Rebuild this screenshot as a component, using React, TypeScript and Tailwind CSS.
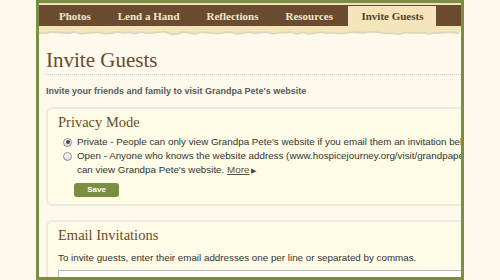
const tabs = ['Photos', 'Lend a Hand', 'Reflections', 'Resources', 'Invite Guests'];

// jagged bottom edge of the paper strip under the nav
const edge = (() => {
  let seed = 7;
  const rand = () => {
    seed = (seed * 9301 + 49297) % 233280;
    return seed / 233280;
  };
  const pts: string[] = [];
  for (let x = 0; x <= 422; x += 6) {
    pts.push(`${x},${(5 + rand() * 2.5).toFixed(1)}`);
  }
  return pts.join(' ');
})();

function TornEdge() {
  return (
    <svg width="422" height="10" viewBox="0 0 422 10" className="block shrink-0">
      <polygon points={`0,0 422,0 ${edge.split(' ').reverse().map((p) => {
        const [x, y] = p.split(',');
        return `${x},${(parseFloat(y) + 1.6).toFixed(1)}`;
      }).join(' ')}`} fill="#ddd5bb" />
      <polygon points={`0,0 422,0 ${edge.split(' ').reverse().join(' ')}`} fill="#f4e5ba" />
    </svg>
  );
}

function Radio({ checked }: { checked?: boolean }) {
  return (
    <span className="w-[9px] h-[9px] rounded-full border border-[#8f8f8f] bg-gradient-to-b from-[#ffffff] to-[#d9d9d9] flex items-center justify-center shrink-0">
      {checked && <span className="w-[4px] h-[4px] rounded-full bg-[#3f4a5a]" />}
    </span>
  );
}

export default function App() {
  return (
    <div className="w-[500px] h-[280px] bg-[#fdf9ec] overflow-hidden">
      <div className="ml-[36px] w-[428px] h-[280px] border-[3px] border-[#7b8c43] overflow-hidden bg-[#fdf9ed] flex flex-col">
        <div className="h-[2px] bg-[#efe2bc] shrink-0" />
        <nav className="h-[21px] bg-[#6b4b2f] flex items-end pl-[6.5px] shrink-0 font-['Liberation_Serif',serif] font-bold text-[11px]">
          {tabs.map((t) => (
            <div
              key={t}
              className={
                t === 'Invite Guests'
                  ? 'h-[20px] ml-[2px] px-[13px] flex items-center bg-[#f4e5ba] text-[#5a3f26]'
                  : 'h-[20px] px-[13.5px] flex items-center text-[#f3e8cc]'
              }
            >
              {t}
            </div>
          ))}
        </nav>
        <TornEdge />

        <div className="pl-[7px] font-['Liberation_Sans',Arial,sans-serif]">
          <h1 className="mt-[12px] h-[27px] leading-[24px] text-[21px] text-[#6b4a2b] font-['Liberation_Serif',serif] border-b border-dotted border-[#cdc7b5]">
            Invite Guests
          </h1>
          <p className="mt-[10px] leading-[12px] text-[9px] font-bold text-[#595959]">
            Invite your friends and family to visit Grandpa Pete's website
          </p>

          <section className="mt-[10px] w-[450px] rounded-[6px] border-2 border-[#ece9dd] bg-[#fefce6] pt-[5px] pl-[10px] pb-[7px]">
            <h2 className="leading-[16px] text-[14.5px] text-[#6b4a2b] font-['Liberation_Serif',serif]">
              Privacy Mode
            </h2>
            <div className="mt-[5px] text-[9.8px] leading-[14px] text-[#333]">
              <div className="flex items-center gap-[5px] pl-[5px] whitespace-nowrap">
                <Radio checked />
                <span>Private - People can only view Grandpa Pete's website if you email them an invitation below.</span>
              </div>
              <div className="flex items-center gap-[5px] pl-[5px] whitespace-nowrap">
                <Radio />
                <span>Open - Anyone who knows the website address (www.hospicejourney.org/visit/grandpapete)</span>
              </div>
              <div className="pl-[19px] whitespace-nowrap">
                can view Grandpa Pete's website.{' '}
                <span className="underline text-[#5e5236]">More</span>
                <span className="ml-[2px] text-[7px] text-[#444]">▶</span>
              </div>
            </div>
            <button className="block mt-[5px] ml-[16px] w-[45px] h-[14px] rounded-[3px] bg-[#7b8c43] text-white text-[8px] font-bold leading-[14px]">
              Save
            </button>
          </section>

          <section className="mt-[14px] w-[450px] rounded-[6px] border-2 border-[#ece9dd] bg-[#fefce6] pt-[5px] pl-[10px] pb-[8px]">
            <h2 className="leading-[16px] text-[14.5px] text-[#6b4a2b] font-['Liberation_Serif',serif]">
              Email Invitations
            </h2>
            <p className="mt-[8px] text-[9.8px] leading-[14px] text-[#333] whitespace-nowrap">
              To invite guests, enter their email addresses one per line or separated by commas.
            </p>
            <div className="mt-[5px] h-[30px] bg-white border border-[#b9b9b9]" />
          </section>
        </div>
      </div>
    </div>
  );
}
